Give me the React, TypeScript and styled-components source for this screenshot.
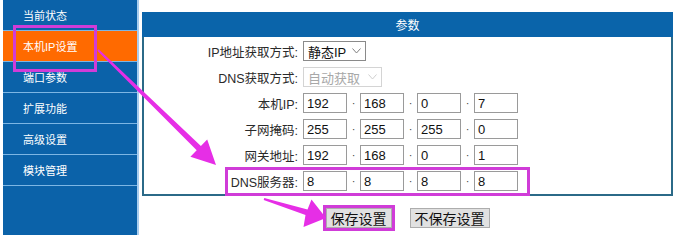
import styled, { createGlobalStyle } from 'styled-components'

const GlobalStyle = createGlobalStyle`
    html, body {
        margin: 0;
        padding: 0;
        background: #ffffff;
    }
    body {
        font-family: "Liberation Sans", "Noto Sans CJK SC", sans-serif;
    }
`

const Page = styled.div`
    position: relative;
    width: 676px;
    height: 235px;
    display: flex;
    flex-direction: row;
    align-items: flex-start;
    overflow: hidden;
`

const Sidebar = styled.div`
    margin-left: 3px;
    width: 134px;
    height: 235px;
    background-color: #0b62a9;
    border-right: 2px solid #a9cdee;
    display: flex;
    flex-direction: column;
`

const NavItem = styled.div<{ active?: boolean }>`
    height: 30px;
    border-bottom: 1px solid #7db6e4;
    padding-left: 20px;
    display: flex;
    align-items: center;
    font-size: 11px;
    color: #ffffff;
    background-color: ${(props) => (props.active ? '#ff6a00' : 'transparent')};
`

const Content = styled.div`
    margin-left: 3px;
    margin-top: 12px;
    width: 531px;
    display: flex;
    flex-direction: column;
`

const Panel = styled.div`
    width: 100%;
`

const PanelHeader = styled.div`
    height: 25px;
    background-color: #0a64aa;
    color: #ffffff;
    font-size: 12px;
    display: flex;
    justify-content: center;
    align-items: center;
`

const PanelBody = styled.div`
    border: 2px solid #2b6a88;
    border-top: none;
    padding-top: 1px;
    display: flex;
    flex-direction: column;
`

const Row = styled.div`
    height: 26px;
    display: grid;
    grid-template-columns: 154px auto;
    column-gap: 5px;
    align-items: center;
`

const Label = styled.div`
    text-align: right;
    font-size: 12.5px;
    color: #2a2a2a;
    white-space: nowrap;
`

const Select = styled.div<{ w: number; disabled?: boolean }>`
    width: ${(props) => props.w}px;
    height: 20px;
    box-sizing: border-box;
    border: 1px solid ${(props) => (props.disabled ? '#d4d4d4' : '#8a8a8a')};
    color: ${(props) => (props.disabled ? '#a8a8a8' : '#111111')};
    font-size: 13px;
    padding: 0 4px;
    display: flex;
    align-items: center;
    justify-content: space-between;
    background: #ffffff;

    svg {
        stroke: ${(props) => (props.disabled ? '#cfcfcf' : '#808080')};
    }
`

const IpGroup = styled.div`
    display: flex;
    align-items: center;
`

const IpBox = styled.div`
    width: 44px;
    height: 20px;
    box-sizing: border-box;
    border: 1px solid #9a9a9a;
    font-size: 13px;
    color: #111111;
    padding-left: 3px;
    display: flex;
    align-items: center;
`

const Dot = styled.span`
    width: 13px;
    text-align: center;
    font-size: 11px;
    color: #444444;
`

const ButtonRow = styled.div`
    margin-top: 12px;
    display: flex;
    justify-content: center;
    gap: 18px;
`

const Button = styled.div<{ marked?: boolean }>`
    height: 20px;
    padding: 0 4px;
    box-sizing: border-box;
    border: 1px solid #adadad;
    background-color: #e1e1e1;
    font-size: 14px;
    color: #111111;
    display: flex;
    align-items: center;
    justify-content: center;
    outline: ${(props) => (props.marked ? '3px solid #d03cd8' : 'none')};
`

const Mark = styled.div<{ x: number; y: number; w: number; h: number }>`
    position: absolute;
    left: ${(props) => props.x}px;
    top: ${(props) => props.y}px;
    width: ${(props) => props.w}px;
    height: ${(props) => props.h}px;
    box-sizing: border-box;
    border: 3px solid #d03cd8;
    pointer-events: none;
`

const Arrows = styled.svg`
    position: absolute;
    left: 0;
    top: 0;
    pointer-events: none;
`

const Chevron = () => (
    <svg width="9" height="6" viewBox="0 0 9 6" fill="none" strokeWidth="1">
        <polyline points="0.5,0.5 4.5,5 8.5,0.5" />
    </svg>
)

const navItems = ['当前状态', '本机IP设置', '端口参数', '扩展功能', '高级设置', '模块管理']

const ipRows = [
    { label: '本机IP:', values: ['192', '168', '0', '7'] },
    { label: '子网掩码:', values: ['255', '255', '255', '0'] },
    { label: '网关地址:', values: ['192', '168', '0', '1'] },
    { label: 'DNS服务器:', values: ['8', '8', '8', '8'] },
]

export default function App() {
    return (
        <Page>
            <GlobalStyle />
            <Sidebar>
                {navItems.map((item, i) => (
                    <NavItem key={item} active={i === 1}>
                        {item}
                    </NavItem>
                ))}
            </Sidebar>
            <Content>
                <Panel>
                    <PanelHeader>参数</PanelHeader>
                    <PanelBody>
                        <Row>
                            <Label>IP地址获取方式:</Label>
                            <Select w={63}>
                                <span>静态IP</span>
                                <Chevron />
                            </Select>
                        </Row>
                        <Row>
                            <Label>DNS获取方式:</Label>
                            <Select w={79} disabled>
                                <span>自动获取</span>
                                <Chevron />
                            </Select>
                        </Row>
                        {ipRows.map((row) => (
                            <Row key={row.label}>
                                <Label>{row.label}</Label>
                                <IpGroup>
                                    {row.values.map((v, i) => (
                                        <IpGroup key={i}>
                                            {i > 0 && <Dot>·</Dot>}
                                            <IpBox>{v}</IpBox>
                                        </IpGroup>
                                    ))}
                                </IpGroup>
                            </Row>
                        ))}
                    </PanelBody>
                </Panel>
                <ButtonRow>
                    <Button marked>保存设置</Button>
                    <Button>不保存设置</Button>
                </ButtonRow>
            </Content>

            <Mark x={13} y={25} w={84} h={47} />
            <Mark x={225} y={167} w={305} h={29} />
            <Arrows width="676" height="235" viewBox="0 0 676 235">
                <polygon
                    fill="#e62ee6"
                    points="98.7,49.3 200.9,146.1 207.2,139.6 216,165 190.4,156.8 196.7,150.3 97.3,50.7"
                />
                <polygon
                    fill="#e62ee6"
                    points="264.3,198 307.5,209.5 311.5,199.5 326,218 303.5,227 305.5,215 263.7,200"
                />
            </Arrows>
        </Page>
    )
}
